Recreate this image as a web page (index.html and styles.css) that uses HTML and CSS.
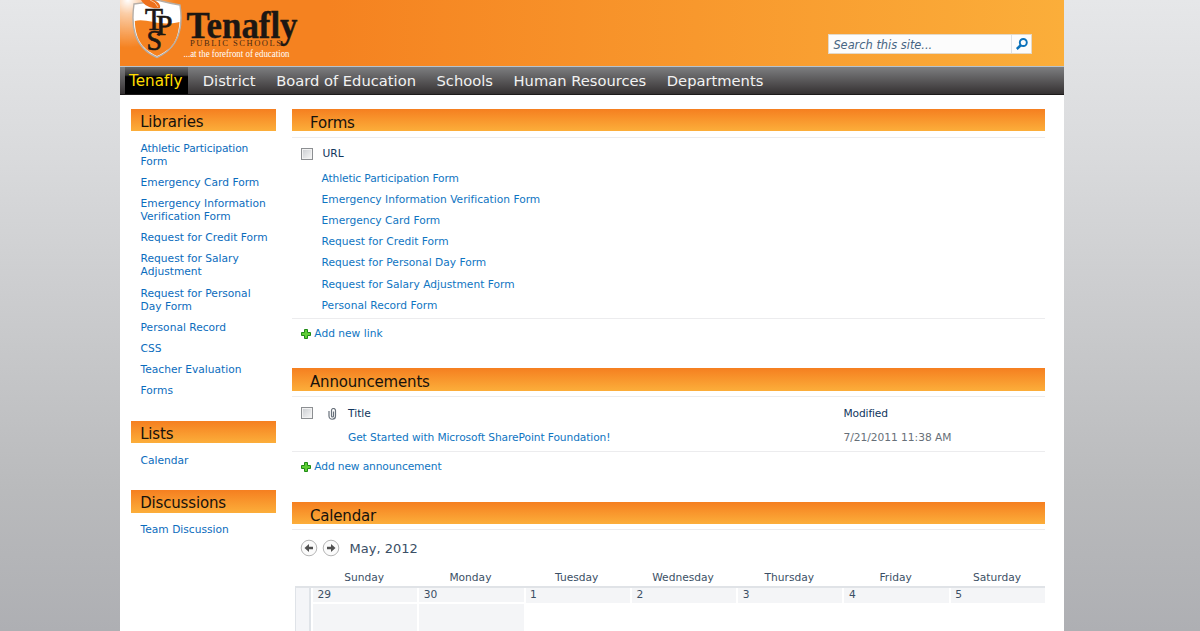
FILE: index.html
```html
<!DOCTYPE html>
<html lang="en">
<head>
<meta charset="utf-8">
<title>Tenafly Public Schools</title>
<link rel="stylesheet" href="styles.css">
</head>
<body>
<div class="page">
  <header class="banner">
    <svg class="logo" width="190" height="66" viewBox="0 0 190 66">
      <path d="M14 4Q26 3 37 0Q48 3 60 5C63 25 61 47 37 57.500C13 47 11 25 14 4Z" fill="#fff" stroke="#b5aea8" stroke-width="1.400"/>
      <path d="M14.800 21C28 18 38 27 59.500 22C58 40 53 49 37 56C20 48 15.500 37 14.800 21Z" fill="#f58220"/>
      <path d="M21 0C25 7 33 9 40 8Q41 3 34 0Z" fill="#ee701c"/>
      <path d="M30 0Q36 2 38 7" fill="none" stroke="#ffd9b5" stroke-width=".8"/>
      <g class="monogram">
        <text x="25" y="30" font-size="32" textLength="18" lengthAdjust="spacingAndGlyphs">T</text>
        <text x="36" y="35" font-size="30" textLength="16.500" lengthAdjust="spacingAndGlyphs">P</text>
        <text x="26.500" y="49.500" font-size="30" textLength="15.500" lengthAdjust="spacingAndGlyphs">S</text>
      </g>
      <text class="logo-name" x="66.500" y="38" textLength="111" lengthAdjust="spacingAndGlyphs">Tenafly</text>
      <text class="logo-sub" x="70" y="45.500" textLength="91" lengthAdjust="spacing">PUBLIC SCHOOLS</text>
      <text class="logo-tag" x="63.500" y="57" textLength="106" lengthAdjust="spacingAndGlyphs">...at the forefront of education</text>
    </svg>
    <div class="search">
      <span class="search-text">Search this site...</span>
      <span class="search-go">
        <svg width="14" height="14" viewBox="0 0 14 14" fill="none" stroke="#0b72bb"><circle cx="8.300" cy="5.500" r="3.500" stroke-width="1.900"/><path d="M6 8L1.800 12" stroke-width="2.500"/></svg>
      </span>
    </div>
  </header>
  <nav class="topnav">
    <a class="tab active">Tenafly</a><a class="tab">District</a><a class="tab">Board of Education</a><a class="tab">Schools</a><a class="tab">Human Resources</a><a class="tab">Departments</a>
  </nav>
  <div class="body">
    <aside class="side">
      <section class="side-group">
        <h2 class="bar side-bar">Libraries</h2>
        <ul class="links">
          <li><span class="tight">Athletic Participation</span><br>Form</li>
          <li>Emergency Card Form</li>
          <li>Emergency Information<br>Verification Form</li>
          <li>Request for Credit Form</li>
          <li>Request for Salary<br>Adjustment</li>
          <li>Request for Personal<br>Day Form</li>
          <li>Personal Record</li>
          <li>CSS</li>
          <li>Teacher Evaluation</li>
          <li>Forms</li>
        </ul>
      </section>
      <section class="side-group">
        <h2 class="bar side-bar">Lists</h2>
        <ul class="links"><li>Calendar</li></ul>
      </section>
      <section class="side-group">
        <h2 class="bar side-bar">Discussions</h2>
        <ul class="links"><li>Team Discussion</li></ul>
      </section>
    </aside>
    <main class="main">
      <section class="part">
        <h2 class="bar">Forms</h2>
        <div class="list">
          <div class="head"><i class="check"></i><span class="col-url">URL</span></div>
          <ul class="rows">
            <li><span class="tight">Athletic Participation Form</span></li>
            <li>Emergency Information Verification Form</li>
            <li>Emergency Card Form</li>
            <li>Request for Credit Form</li>
            <li>Request for Personal Day Form</li>
            <li>Request for Salary Adjustment Form</li>
            <li>Personal Record Form</li>
          </ul>
        </div>
        <div class="add"><svg class="plus" width="10" height="10" viewBox="0 0 10 10"><path d="M3.500.5h3v3h3v3h-3v3h-3v-3h-3v-3h3z" fill="#5fce35" stroke="#1f8a16"/></svg>Add new link</div>
      </section>
      <section class="part">
        <h2 class="bar">Announcements</h2>
        <div class="list">
          <div class="head"><i class="check"></i>
            <svg class="clip" width="9" height="12" viewBox="0 0 9 12" fill="none" stroke="#68717b" stroke-width="1.200"><path d="M1 3v5a3 3 0 0 0 6.500 0V2.500a2 2 0 0 0-4 0V8a.8.8 0 0 0 2 0V3.500"/></svg>
            <span class="col-title">Title</span><span class="tight">Modified</span></div>
          <div class="news-row"><a class="news-link">Get Started with Microsoft SharePoint Foundation!</a><span class="date">7/21/2011 11:38 AM</span></div>
        </div>
        <div class="add"><svg class="plus" width="10" height="10" viewBox="0 0 10 10"><path d="M3.500.5h3v3h3v3h-3v3h-3v-3h-3v-3h3z" fill="#5fce35" stroke="#1f8a16"/></svg><span class="tight">Add new announcement</span></div>
      </section>
      <section class="part">
        <h2 class="bar">Calendar</h2>
        <div class="cal">
          <div class="month">
            <svg width="18" height="18" viewBox="0 0 18 18"><circle cx="9" cy="9" r="7.800" fill="#fbfbfb" stroke="#b5b5b5"/><path d="M4.500 9L9 5v2.700h4v2.600H9V13z" fill="#505050"/></svg>
            <svg width="18" height="18" viewBox="0 0 18 18"><circle cx="9" cy="9" r="7.800" fill="#fbfbfb" stroke="#b5b5b5"/><path d="M13.500 9L9 5v2.700H5v2.600h4V13z" fill="#505050"/></svg>
            <span class="month-name">May, 2012</span>
          </div>
          <div class="days"><span>Sunday</span><span>Monday</span><span>Tuesday</span><span>Wednesday</span><span>Thursday</span><span>Friday</span><span>Saturday</span></div>
          <div class="grid">
            <div class="week"></div>
            <div class="day past"><b>29</b></div><div class="day past"><b>30</b></div><div class="day"><b>1</b></div><div class="day"><b>2</b></div><div class="day"><b>3</b></div><div class="day"><b>4</b></div><div class="day"><b>5</b></div>
          </div>
        </div>
      </section>
    </main>
  </div>
</div>
</body>
</html>
```
FILE: styles.css
```css
* { box-sizing: border-box; }
body {
  margin: 0;
  height: 631px;
  overflow: hidden;
  font: 10.67px/13px Verdana, "DejaVu Sans", sans-serif;
  font-variant-ligatures: none;
  color: #3b4f65;
  background: linear-gradient(#e6e7e9, #d9dadc 25%, #b9babc 78%, #aeafb3);
}
h2, ul { margin: 0; padding: 0; list-style: none; font-weight: normal; }
.page { width: 944.400px; height: 631px; margin-left: 120px; background: #fff; overflow: hidden; }
.banner {
  display: flex;
  justify-content: space-between;
  height: 66px;
  background: radial-gradient(circle at 8px 0, #fff 0, rgba(255,255,255,.6) 14px, rgba(255,255,255,0) 48px), linear-gradient(90deg, #f58220 22%, #fbae3a);
}
.logo { font-family: "Liberation Serif", serif; }
.monogram { fill: #1c1713; stroke: #1c1713; stroke-width: .7px; }
.logo-name { font-size: 38px; font-weight: bold; fill: #1c1713; stroke: #1c1713; stroke-width: .4px; }
.logo-sub { font-size: 8.500px; fill: #4b2a12; }
.logo-tag { font-size: 10px; fill: #fff; }
.search {
  display: flex;
  width: 204px;
  height: 20px;
  margin: 34px 32px 0 0;
  background: #fcfcfc;
  border: 1px solid #e3d9c9;
  font-size: 11.400px;
  font-style: italic;
  line-height: 20px;
}
.search-text { flex: 1; padding-left: 4px; color: #476583; }
.search-go { width: 20px; padding: 2px 0 0 3px; line-height: 0; border-left: 1px solid #dde1e5; }
.topnav {
  display: flex;
  height: 29.400px;
  padding-left: 5px;
  border-top: 1px solid #b9c3cc;
  border-bottom: 1px solid #1d1a1a;
  background: linear-gradient(#7d7e80, #353132);
  font-size: 14.700px;
  line-height: 28px;
  color: #f2f2f2;
}
.tab { padding: 0 10.300px; white-space: nowrap; }
.active { width: 63px; margin-right: 4.500px; padding: 0 4px; color: #fd0; font-size: 15.200px; background: linear-gradient(#666 0, #333 30%, #000 36%); }
.body { display: flex; padding: 13.600px 19px 0 11.400px; gap: 15.600px; }
.side { width: 145px; flex: none; }
.main { width: 753.400px; flex: none; }
.bar {
  height: 22.400px;
  padding-left: 18px;
  background: linear-gradient(#f57f20, #fcae3a);
  color: #16120c;
  font-size: 15px;
  letter-spacing: -.17px;
  line-height: 28px;
}
.side-bar { padding-left: 8.800px; line-height: 26px; }
.side-group { margin-bottom: 20px; }
.links { padding: 6.100px 0 0 9.200px; color: #0b6cbd; }
.links li { padding: 4.100px 0; }
.side-group .links { margin-bottom: -.4px; }
.list { margin-top: 5.500px; border-top: 1px solid #ececee; border-bottom: 1px solid #ececee; }
.head { display: flex; align-items: center; height: 32px; padding-left: 9px; color: #10365d; }
.check { width: 12px; height: 12px; margin-right: 9.500px; border: 1px solid #8c8f92; background: linear-gradient(135deg, #c9ccd0, #f8f8f8); box-shadow: inset 0 0 0 1px #f2f2f2; }
.rows { padding-left: 29.600px; }
.rows li { height: 21.130px; line-height: 17px; color: #0f75c2; }
.add { display: flex; align-items: center; gap: 3.300px; height: 29.600px; padding-left: 9px; color: #0f75c2; }
.tight { letter-spacing: -.13px; }
.part { margin-bottom: 20px; }
.clip { margin: 1px 11px 0 5.500px; }
.col-title { width: 495.500px; }
.news-row { display: flex; height: 21.700px; padding-left: 56px; line-height: 18px; }
.news-link { width: 495.500px; color: #0f75c2; letter-spacing: -.1px; }
.date { color: #676f78; letter-spacing: -.04px; }
.cal { margin-top: 5.500px; padding: 9px 0 0 3px; border-top: 1px solid #ececee; }
.month { display: flex; align-items: center; gap: 4.300px; padding-left: 5px; height: 18px; }
.month-name { padding-left: 5px; font-size: 13px; }
.days { display: grid; grid-template-columns: repeat(6, 106.300px) 1fr; height: 28.300px; padding: 14px 0 0 16px; text-align: center; }
.grid { display: grid; grid-template-columns: 16px repeat(6, 104.300px) 1fr; column-gap: 2px; height: 60px; border-top: 2px solid #e0e3e7; }
.week { border: solid #dfe3e8; border-width: 0 2px 0 1px; background: #f4f5f8; }
.day b { display: block; height: 15px; padding-left: 4.500px; font-weight: normal; line-height: 14px; background: #f4f5f7; }
.past { background: #f4f5f7; }
.past b { height: 16.500px; border-bottom: 2px solid #fff; }
```
